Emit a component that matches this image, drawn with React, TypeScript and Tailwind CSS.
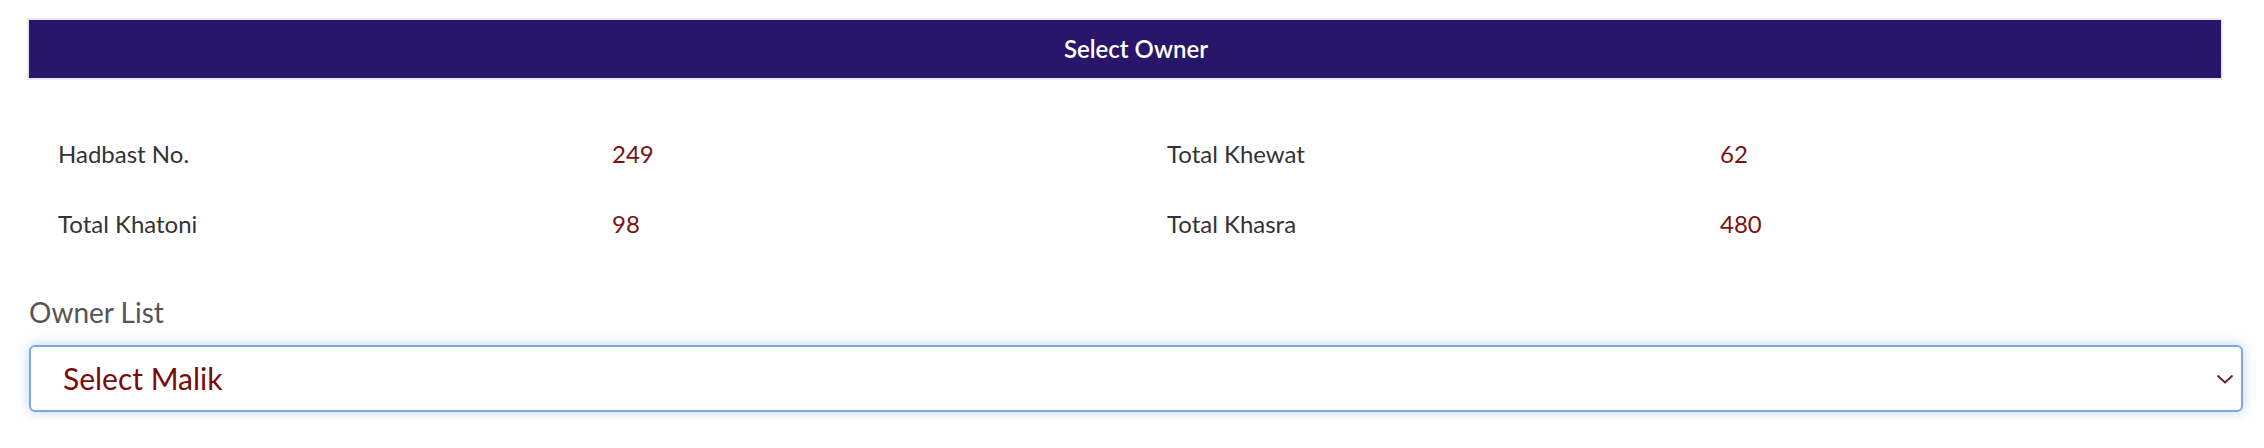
import { Fragment } from "react";

const font = { fontFamily: "'Lato', 'Open Sans', sans-serif" };

const stats = [
  { label: "Hadbast No.", value: "249" },
  { label: "Total Khewat", value: "62" },
  { label: "Total Khatoni", value: "98" },
  { label: "Total Khasra", value: "480" },
];

function StatRow({ items }: { items: typeof stats }) {
  return (
    <div className="grid h-[70px] grid-cols-[554px_555px_553px_1fr] items-center">
      {items.map((s) => (
        <Fragment key={s.label}>
          <span className="text-[24px] text-[#333333]">{s.label}</span>
          <span className="text-[24px] text-[#7a1212]">{s.value}</span>
        </Fragment>
      ))}
    </div>
  );
}

export default function App() {
  return (
    <div className="h-[448px] w-[2264px] bg-white pl-[27px] pr-[21px] pt-[18px]" style={font}>
      <div className="mr-[20px] border-2 border-[#e8e8e8]">
        <div className="flex h-[58px] items-center justify-center bg-[#27166a] pl-[22px] text-[24px] font-semibold text-white">
          Select Owner
        </div>
      </div>

      <div className="mt-[39px] pl-[31px]">
        <StatRow items={[stats[0], stats[1]]} />
        <StatRow items={[stats[2], stats[3]]} />
      </div>

      <div className="ml-[2px] mt-[36px]">
        <label className="block text-[28px] leading-[34px] text-[#555555]">Owner List</label>
        <div className="mt-[16px] flex h-[67px] items-center justify-between rounded-[6px] border-2 border-[#7fa9db] bg-white pl-[32px] pr-[7px] shadow-[0_0_12px_rgba(102,160,225,0.45)]">
          <span className="text-[30px] text-[#7a0a0a]">Select Malik</span>
          <svg width="18" height="12" viewBox="0 0 18 12" fill="none">
            <path d="M1.5 2.5l7.5 7 7.5-7" stroke="#6b1a22" strokeWidth="1.8" />
          </svg>
        </div>
      </div>
    </div>
  );
}
